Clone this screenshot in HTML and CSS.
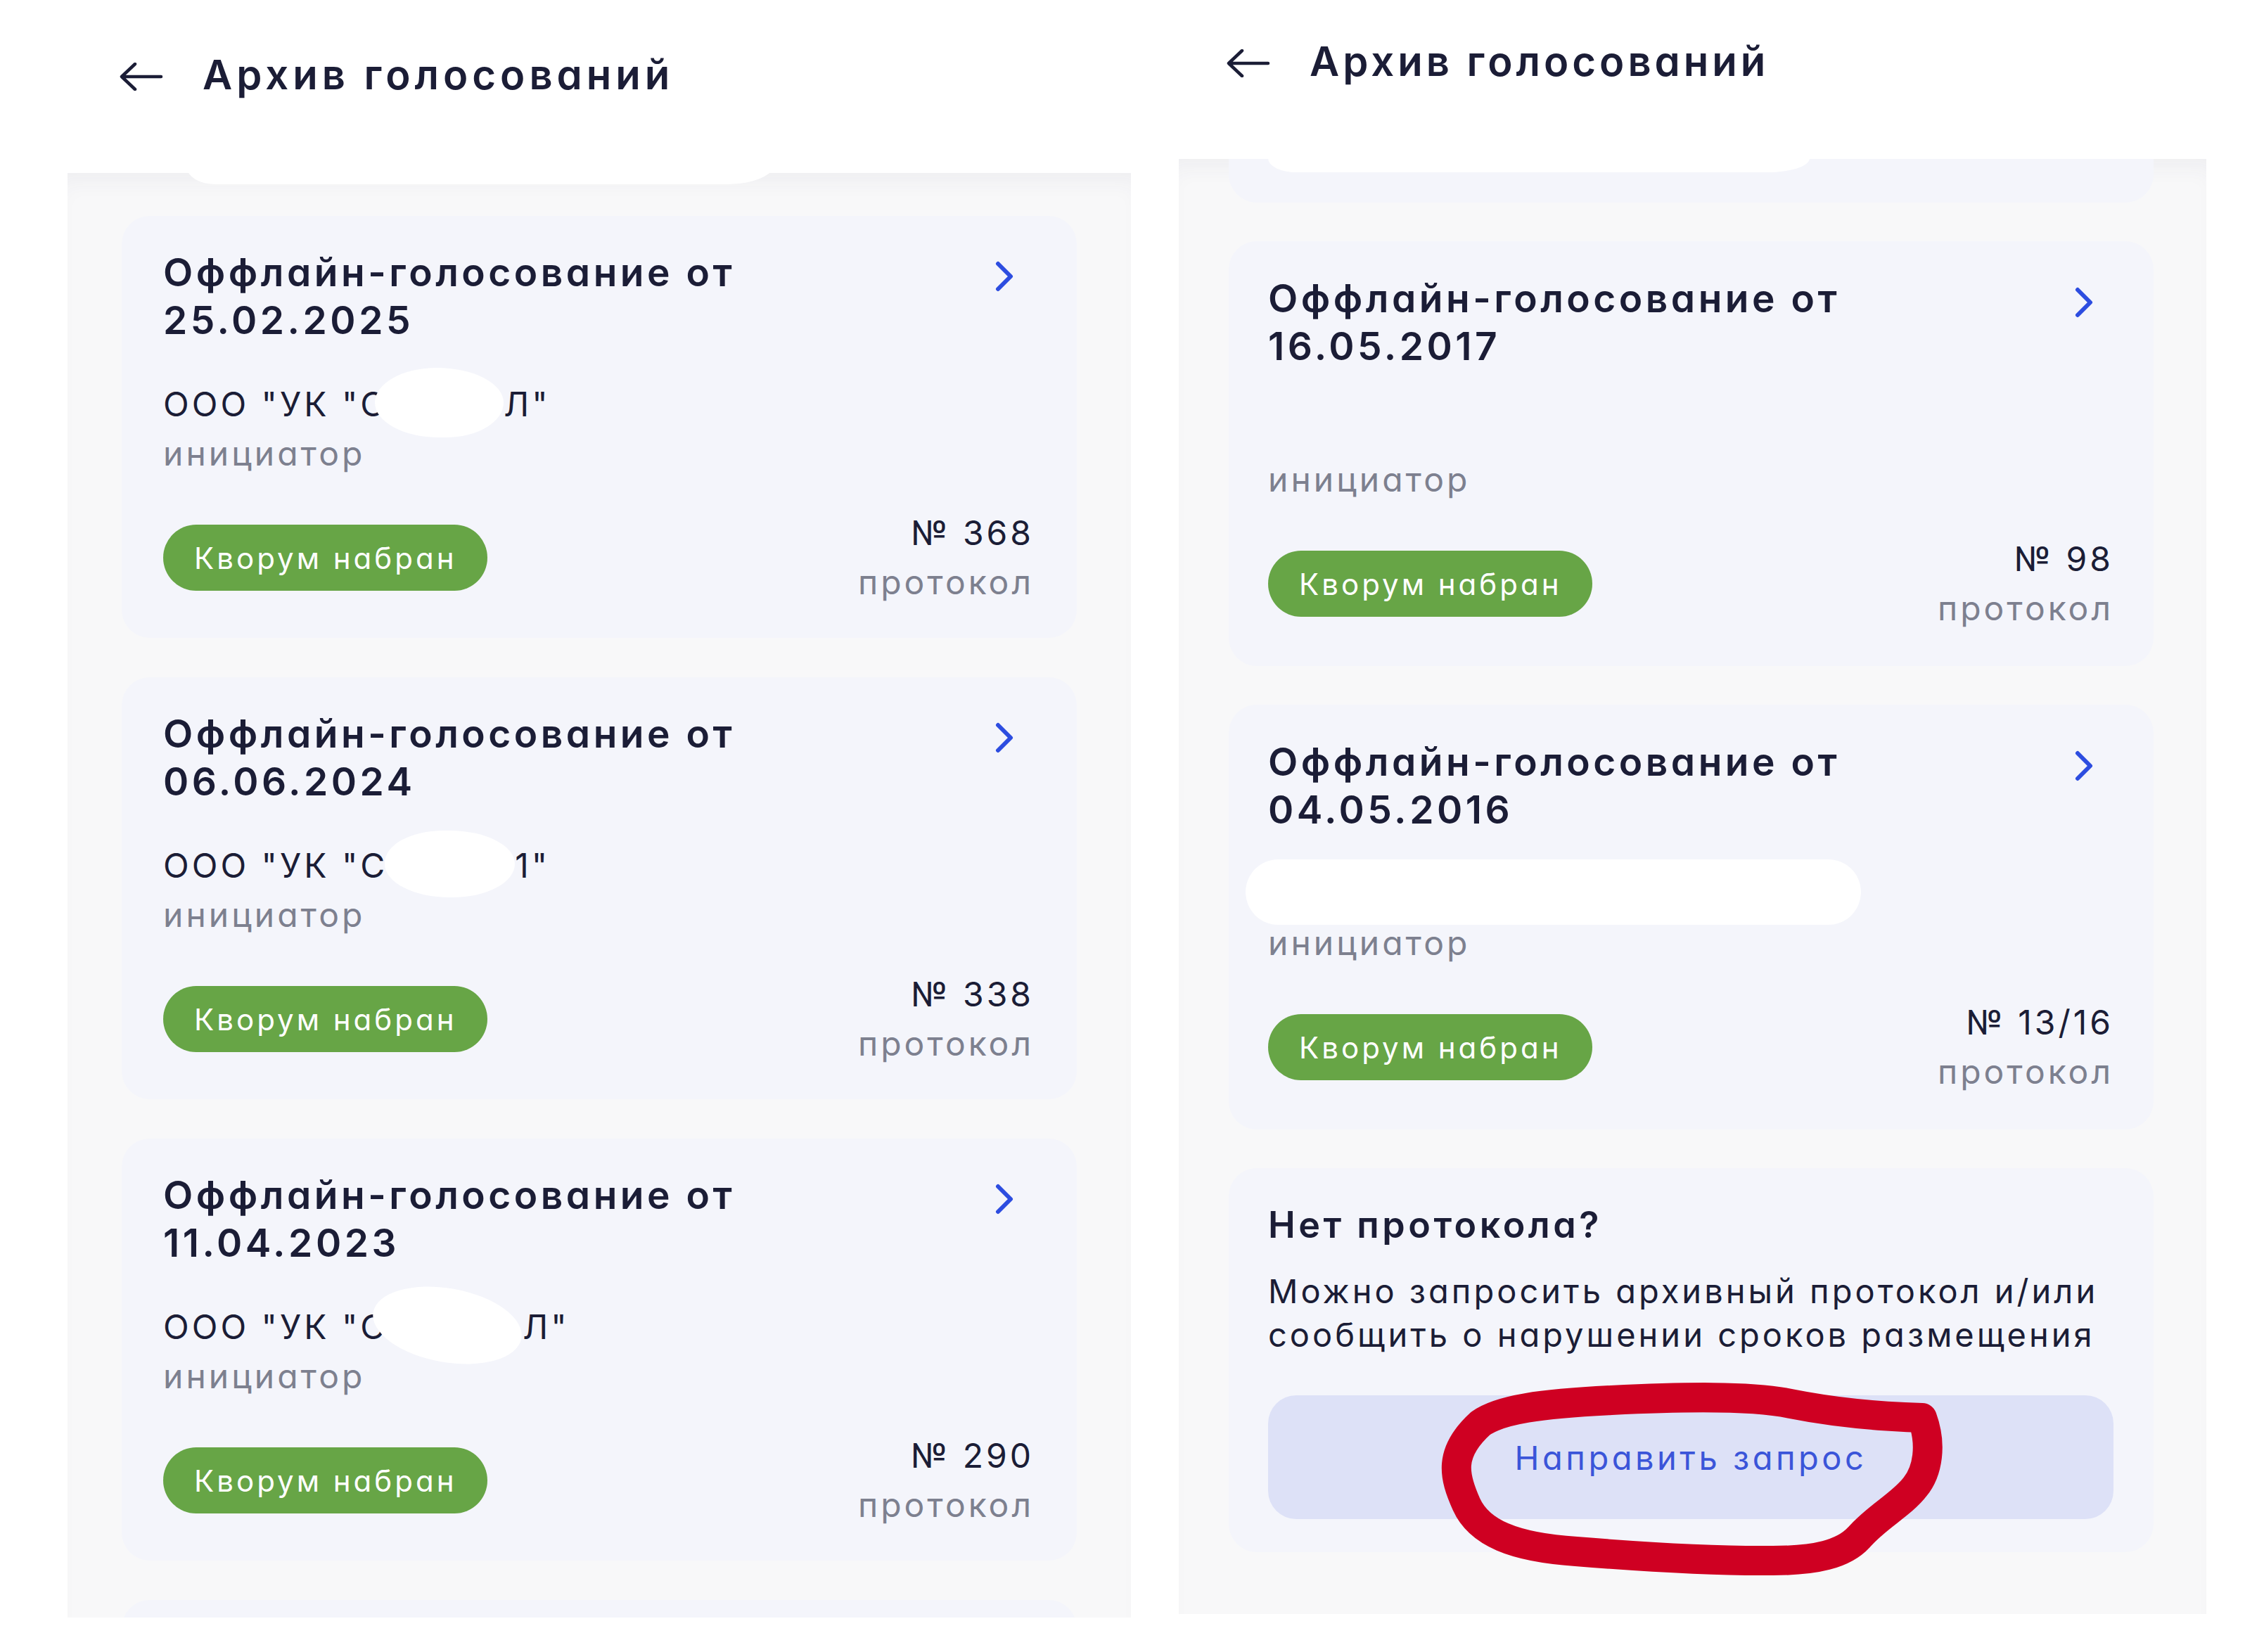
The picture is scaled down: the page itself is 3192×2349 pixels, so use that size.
FILE: index.html
```html
<!DOCTYPE html>
<html lang="ru">
<head>
    <meta charset="utf-8">
    <title>Архив голосований</title>
    <link rel="stylesheet" href="styles.css">
</head>
<body>
<div class="screens">

    <!-- Левый скриншот -->
    <div class="screen screen-left">
        <div class="bar">
            <svg class="back" viewBox="0 0 64 40"><path d="M5 20 H61 M24 2 L5 20 L24 38"/></svg>
            <h1>Архив голосований</h1>
        </div>
        <div class="smudge"></div>
        <div class="list">
            <div class="card">
                <div class="card-head">
                    <div class="card-title">Оффлайн-голосование от 25.02.2025</div>
                    <svg class="chevron" viewBox="0 0 28 44"><path d="M5 4 L23 22 L5 40"/></svg>
                </div>
                <div class="org">ООО "УК "С<span class="blot blot-1"></span>Л"</div>
                <div class="role">инициатор</div>
                <div class="card-foot">
                    <span class="badge">Кворум набран</span>
                    <div class="proto">
                        <div>№ 368</div>
                        <div class="role">протокол</div>
                    </div>
                </div>
            </div>

            <div class="card">
                <div class="card-head">
                    <div class="card-title">Оффлайн-голосование от 06.06.2024</div>
                    <svg class="chevron" viewBox="0 0 28 44"><path d="M5 4 L23 22 L5 40"/></svg>
                </div>
                <div class="org">ООО "УК "С<span class="blot blot-2"></span>1"</div>
                <div class="role">инициатор</div>
                <div class="card-foot">
                    <span class="badge">Кворум набран</span>
                    <div class="proto">
                        <div>№ 338</div>
                        <div class="role">протокол</div>
                    </div>
                </div>
            </div>

            <div class="card">
                <div class="card-head">
                    <div class="card-title">Оффлайн-голосование от 11.04.2023</div>
                    <svg class="chevron" viewBox="0 0 28 44"><path d="M5 4 L23 22 L5 40"/></svg>
                </div>
                <div class="org">ООО "УК "С<span class="blot blot-3"></span>Л"</div>
                <div class="role">инициатор</div>
                <div class="card-foot">
                    <span class="badge">Кворум набран</span>
                    <div class="proto">
                        <div>№ 290</div>
                        <div class="role">протокол</div>
                    </div>
                </div>
            </div>

            <div class="card card-stub"></div>
        </div>
    </div>

    <!-- Правый скриншот -->
    <div class="screen screen-right">
        <div class="bar">
            <svg class="back" viewBox="0 0 64 40"><path d="M5 20 H61 M24 2 L5 20 L24 38"/></svg>
            <h1>Архив голосований</h1>
        </div>
        <div class="smudge"></div>
        <div class="list">
            <div class="card card-cut"></div>

            <div class="card">
                <div class="card-head">
                    <div class="card-title">Оффлайн-голосование от 16.05.2017</div>
                    <svg class="chevron" viewBox="0 0 28 44"><path d="M5 4 L23 22 L5 40"/></svg>
                </div>
                <div class="org">&nbsp;</div>
                <div class="role">инициатор</div>
                <div class="card-foot">
                    <span class="badge">Кворум набран</span>
                    <div class="proto">
                        <div>№ 98</div>
                        <div class="role">протокол</div>
                    </div>
                </div>
            </div>

            <div class="card">
                <div class="card-head">
                    <div class="card-title">Оффлайн-голосование от 04.05.2016</div>
                    <svg class="chevron" viewBox="0 0 28 44"><path d="M5 4 L23 22 L5 40"/></svg>
                </div>
                <div class="org"><span class="blot blot-wide"></span></div>
                <div class="role">инициатор</div>
                <div class="card-foot">
                    <span class="badge">Кворум набран</span>
                    <div class="proto">
                        <div>№ 13/16</div>
                        <div class="role">протокол</div>
                    </div>
                </div>
            </div>

            <div class="card help">
                <h2>Нет протокола?</h2>
                <p>Можно запросить архивный протокол и/или сообщить о нарушении сроков размещения</p>
                <a href="#" class="request">Направить запрос</a>
                <!-- обводка от руки -->
                <svg class="scribble" viewBox="0 0 723 262">
                    <path d="M64 50 C92 30 150 22 250 17 C350 12 450 10 505 22 C565 34 625 40 692 42 C706 80 700 118 682 140 C662 166 628 182 602 212 C580 236 540 245 480 245 C400 246 300 240 200 232 C110 226 62 205 44 165 C26 125 18 92 64 50 Z"/>
                </svg>
            </div>
        </div>
    </div>

</div>
</body>
</html>
```

FILE: styles.css
```css
body {
    margin: 0;
    background: #fff;
    font-family: Inter, "Noto Sans", sans-serif;
    font-feature-settings: "cv11";
    color: #1b1d36;
}

.screens {
    display: flex;
    align-items: flex-start;
}

.screen {
    position: relative;
    flex-shrink: 0;
}

.screen-left {
    margin-left: 96px;
    width: 1512px;
}

.screen-right {
    margin-left: 68px;
    width: 1461px;
}

/* Шапка */
.bar {
    box-sizing: border-box;
    height: 246px;
    padding: 70px 0 0 72px;
    display: flex;
    align-items: flex-start;
    gap: 56px;
    background: #fff;
}

.screen-right .bar {
    height: 226px;
    padding: 51px 0 0 66px;
}

.bar h1 {
    margin: 0;
    font-size: 58px;
    font-weight: 600;
    line-height: 72px;
    letter-spacing: 6px;
}

.screen-right .bar h1 {
    letter-spacing: 5px;
}

.back {
    width: 64px;
    height: 40px;
    margin-top: 19px;
    fill: none;
    stroke: #1b1d36;
    stroke-width: 4.5;
    stroke-linecap: round;
    stroke-linejoin: round;
}

/* Замазанные куски */
.smudge {
    position: absolute;
    z-index: 3;
    background: #fff;
    left: 170px;
    top: 160px;
    width: 840px;
    height: 102px;
    border-radius: 0 0 70px 40px / 0 0 36px 24px;
}

.screen-right .smudge {
    left: 127px;
    top: 150px;
    width: 770px;
    height: 95px;
    border-radius: 0 0 60px 40px / 0 0 20px 20px;
}

/* Список */
.list {
    box-sizing: border-box;
    height: 2054px;
    overflow: hidden;
    padding: 61px 77px 0 77px;
    display: flex;
    flex-direction: column;
    gap: 56px;
    background: #f8f8f9;
    box-shadow: inset 0 26px 30px -14px rgba(60, 60, 90, 0.05);
}

.screen-right .list {
    height: 2069px;
    padding: 0 75px 0 71px;
    gap: 55px;
}

.card {
    position: relative;
    flex-shrink: 0;
    background: #f4f5fb;
    border-radius: 40px;
    padding: 46px 61px 44px 59px;
}

.screen-right .card {
    padding: 47px 57px 47px 56px;
}

.card-stub {
    height: 200px;
}

.screen-right .card-cut {
    height: 62px;
    padding: 0;
    border-radius: 0 0 40px 40px;
}

.card-head {
    display: flex;
    justify-content: space-between;
    align-items: flex-start;
}

.card-title {
    max-width: 900px;
    font-size: 55px;
    font-weight: 600;
    line-height: 68px;
    letter-spacing: 4.5px;
}

.chevron {
    width: 28px;
    height: 44px;
    margin: 18px 28px 0 0;
    fill: none;
    stroke: #2d4de0;
    stroke-width: 6;
    stroke-linecap: round;
    stroke-linejoin: round;
}

.org,
.role,
.proto {
    font-size: 48px;
    line-height: 70px;
    letter-spacing: 4px;
}

.org {
    margin-top: 51px;
}

.role {
    color: #7d808f;
}

.blot {
    display: inline-block;
    vertical-align: middle;
    background: #fff;
    position: relative;
    top: -6px;
    margin: -25px 0;
}

.blot-1 {
    width: 183px;
    height: 99px;
    margin-left: -18px;
    border-radius: 48% 52% 45% 50% / 50% 50% 50% 50%;
}

.blot-2 {
    width: 185px;
    height: 95px;
    margin-left: -4px;
    border-radius: 45% 50% 48% 50% / 48% 50% 50% 50%;
}

.blot-3 {
    width: 214px;
    height: 105px;
    margin-left: -22px;
    border-radius: 50%;
    transform: rotate(10deg);
}

.blot-wide {
    width: 875px;
    height: 93px;
    margin-left: -32px;
    border-radius: 47px;
}

.card-foot {
    margin-top: 43px;
    display: flex;
    justify-content: space-between;
    align-items: center;
}

.badge {
    display: flex;
    align-items: center;
    height: 94px;
    padding: 0 44px;
    border-radius: 47px;
    background: #67a546;
    color: #fff;
    font-size: 42px;
    letter-spacing: 4px;
}

.proto {
    text-align: right;
}

/* Карточка "Нет протокола?" */
.help h2 {
    margin: 0;
    font-size: 52px;
    font-weight: 600;
    line-height: 68px;
    letter-spacing: 4.5px;
}

.help p {
    margin: 29px 0 0;
    font-size: 47px;
    line-height: 62px;
    letter-spacing: 4px;
}

.request {
    display: flex;
    justify-content: center;
    align-items: center;
    height: 176px;
    margin-top: 55px;
    border-radius: 40px;
    background: #dde1f7;
    color: #3b55d9;
    font-size: 47px;
    letter-spacing: 4.5px;
    text-decoration: none;
}

.scribble {
    position: absolute;
    left: 294px;
    top: 313px;
    width: 723px;
    height: 262px;
    overflow: visible;
    fill: none;
    stroke: #cf0022;
    stroke-width: 42;
    stroke-linejoin: round;
}
```
